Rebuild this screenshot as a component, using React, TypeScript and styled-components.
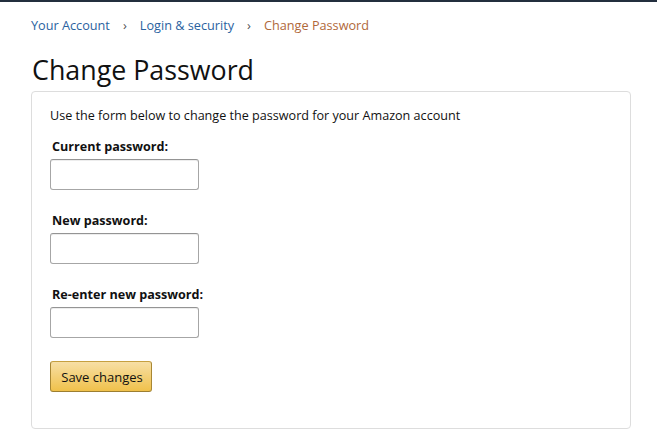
import React from 'react';
import styled, { createGlobalStyle } from 'styled-components';

const GlobalStyle = createGlobalStyle`
  html, body {
    margin: 0;
    padding: 0;
    background: #ffffff;
    font-family: "Open Sans", "Noto Sans", Arial, sans-serif;
    color: #111111;
  }
`;

const Page = styled.div`
  width: 657px;
  height: 444px;
  overflow: hidden;
  border-top: 2px solid #232f3e;
  box-sizing: border-box;
`;

const Content = styled.div`
  padding: 14px 26px 0 31px;
`;

const Breadcrumb = styled.nav`
  display: flex;
  align-items: center;
  font-size: 12.7px;
  line-height: 18px;
`;

const Crumb = styled.a<{ $current?: boolean }>`
  color: ${p => (p.$current ? '#b0683a' : '#2a62a0')};
  text-decoration: none;
`;

const Separator = styled.span`
  color: #555555;
  font-size: 13px;
  margin: 0 13px;
`;

const Title = styled.h1`
  margin: 18px 0 0 1px;
  font-size: 26.8px;
  font-weight: 400;
  line-height: 36px;
  color: #111111;
`;

const Box = styled.div`
  margin-top: 3px;
  width: 600px;
  height: 338px;
  box-sizing: border-box;
  border: 1px solid #dddddd;
  border-radius: 4px;
  padding: 14px 18px;
`;

const Intro = styled.p`
  margin: 0 0 12px;
  font-size: 12.6px;
  line-height: 19px;
  color: #111111;
`;

const Field = styled.div`
  display: flex;
  flex-direction: column;
  margin-bottom: 21px;
`;

const Label = styled.label`
  font-size: 12.6px;
  font-weight: 700;
  line-height: 19px;
  margin: 0 0 3px 2px;
  color: #111111;
`;

const Input = styled.input`
  width: 149px;
  height: 31px;
  box-sizing: border-box;
  border: 1px solid #a6a6a6;
  border-top-color: #949494;
  border-radius: 3px;
  box-shadow: 0 1px 0 rgba(255, 255, 255, 0.5), 0 1px 0 rgba(0, 0, 0, 0.07) inset;
  padding: 3px 7px;
  font-size: 13px;
  font-family: inherit;
  outline: none;
`;

const SaveButton = styled.button`
  margin-top: 2px;
  width: 102px;
  height: 31px;
  box-sizing: border-box;
  border: 1px solid #a88734;
  border-color: #c6a040 #a88734 #9c7e31;
  border-radius: 3px;
  background: linear-gradient(to bottom, #f7dfa5, #f0c14b);
  color: #111111;
  font-family: inherit;
  font-size: 13px;
  padding: 0 0 0 2px;
  cursor: pointer;
`;

const fields = ['Current password:', 'New password:', 'Re-enter new password:'];

const App: React.FC = () => {
  return (
    <Page>
      <GlobalStyle />
      <Content>
        <Breadcrumb>
          <Crumb href="#">Your Account</Crumb>
          <Separator>›</Separator>
          <Crumb href="#">Login &amp; security</Crumb>
          <Separator>›</Separator>
          <Crumb $current>Change Password</Crumb>
        </Breadcrumb>
        <Title>Change Password</Title>
        <Box>
          <Intro>Use the form below to change the password for your Amazon account</Intro>
          {fields.map(label => (
            <Field key={label}>
              <Label>{label}</Label>
              <Input type="password" />
            </Field>
          ))}
          <SaveButton>Save changes</SaveButton>
        </Box>
      </Content>
    </Page>
  );
};

export default App;
